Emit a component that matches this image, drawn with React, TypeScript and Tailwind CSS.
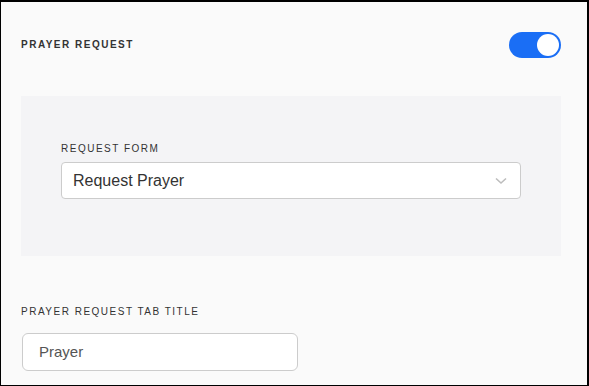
import React from 'react';

export default function App() {
  return (
    <div className="w-[589px] h-[386px] overflow-hidden bg-[#fafafa] border-black border-t-2 border-l border-r-2 border-b font-['Liberation_Sans',Arial,sans-serif]">
      <div className="pl-5 pr-[26px] pt-[30px]">
        {/* Header row */}
        <div className="flex items-center justify-between h-[26px]">
          <h2 className="text-[10px] font-bold tracking-[1.5px] text-[#333] leading-[14px]">PRAYER REQUEST</h2>
          <button className="w-[52px] h-[26px] rounded-full bg-[#1a6ef5] flex items-center justify-end pr-[2px]">
            <span className="w-[22px] h-[22px] rounded-full bg-white block" />
          </button>
        </div>

        {/* Request form panel */}
        <div className="mt-[38px] h-[160px] bg-[#f4f4f6] px-10 pt-[46px]">
          <label className="block text-[10px] tracking-[1.5px] text-[#333] leading-[14px]">REQUEST FORM</label>
          <div className="mt-[6px] h-[37px] bg-white border border-[#cccccc] rounded-[4px] flex items-center justify-between pl-[11px] pr-[13px]">
            <span className="text-[16px] text-[#333]">Request Prayer</span>
            <svg width="12" height="8" viewBox="0 0 12 8" fill="none">
              <path d="M1 1.5 L6 6 L11 1.5" stroke="#bdbdbd" strokeWidth="1.6" />
            </svg>
          </div>
        </div>

        {/* Tab title */}
        <div className="mt-[49px]">
          <label className="block text-[10px] tracking-[1.5px] text-[#333] leading-[14px]">PRAYER REQUEST TAB TITLE</label>
          <div className="mt-[14px] ml-px w-[276px] h-[38px] bg-white border border-[#cccccc] rounded-[6px] flex items-center pl-4">
            <span className="text-[15px] text-[#555]">Prayer</span>
          </div>
        </div>
      </div>
    </div>
  );
}
